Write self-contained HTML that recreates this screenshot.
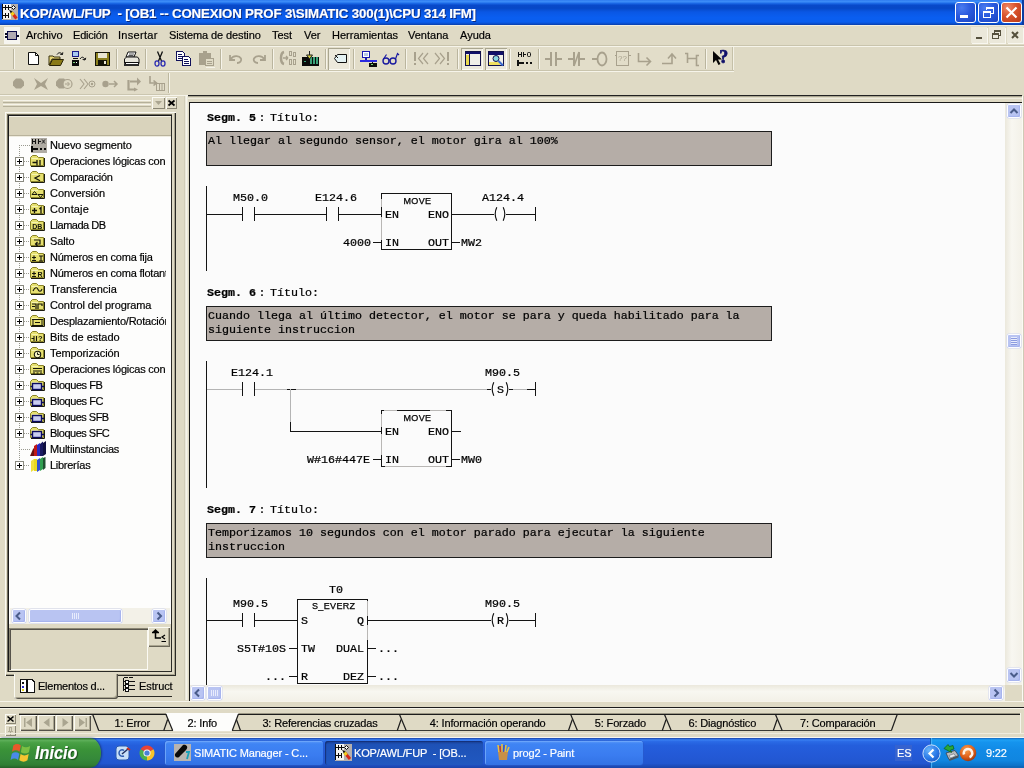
<!DOCTYPE html>
<html><head><meta charset="utf-8"><title>KOP/AWL/FUP</title>
<style>
html,body{margin:0;padding:0;}
body{width:1024px;height:768px;overflow:hidden;background:#dfdac5;font-family:"Liberation Sans",sans-serif;font-size:11px;color:#000;}
#scr{will-change:transform;position:relative;width:1024px;height:768px;overflow:hidden;background:#dfdac5;}
.a{position:absolute;}
.t{position:absolute;white-space:pre;line-height:1;-webkit-text-stroke:0.18px currentColor;}
.m{position:absolute;white-space:pre;font-family:"Liberation Mono",monospace;font-size:11.67px;line-height:14px;color:#000;-webkit-text-stroke:0.22px #000;}
.mb{font-weight:bold;}
.s{position:absolute;white-space:pre;font-family:"Liberation Sans",sans-serif;font-size:9px;line-height:12px;color:#000;-webkit-text-stroke:0.25px #000;}
.k{position:absolute;background:#141414;}
.g{position:absolute;background:#b4b4b4;}
svg{position:absolute;overflow:visible;}

</style></head>
<body>
<div id="scr">
<!-- titlebar.html -->
<div class="a" id="title" style="left:0;top:0;width:1024px;height:25px;background:linear-gradient(to bottom,#2f7cf0 0%,#3d8ef8 7%,#1c6ae8 13%,#0849ca 21%,#0748c6 33%,#0a57e4 48%,#0a5ef0 70%,#0a5eee 88%,#0a4fd0 94%,#0a3ea8 100%);"></div>
<div class="a" style="left:1022px;top:0;width:2px;height:25px;background:#0a3ca0;"></div>
<svg style="left:2px;top:4px" width="16" height="16" viewBox="0 0 16 16" shape-rendering="crispEdges"><rect x="0" y="0" width="16" height="16" fill="#b4b0ae"/><rect x="1" y="0" width="8" height="15" fill="#f4f4f2"/><rect x="0" y="0" width="1" height="15" fill="#0a0a0a"/><path d="M1 3.500H9M1 11.500H7M3.500 1V6M6.500 1V6M3.500 9V14M6.500 9V14" stroke="#0a0a0a" fill="none"/><path d="M9.500 3.500L11.500 1.500L13.500 3.500L11.500 5.500Z" fill="#f4f4f2" stroke="#0a0a0a" shape-rendering="auto"/><path d="M7 5.500L9 10L11 8Z" fill="#0a0a0a" shape-rendering="auto"/><path d="M10 9L14.500 14.500" stroke="#d82818" stroke-width="3" shape-rendering="auto"/><path d="M9.500 8.500L11.500 11" stroke="#f0d020" stroke-width="3" shape-rendering="auto"/></svg>
<div class="t" style="left:20px;top:7px;font-size:13.3px;font-weight:bold;color:#fff;text-shadow:1px 1px 0 #0a2a80;letter-spacing:-0.16px;">KOP/AWL/FUP  - [OB1 -- CONEXION PROF 3\SIMATIC 300(1)\CPU 314 IFM]</div>
<!-- window buttons -->
<div class="a" style="left:955px;top:2px;width:19px;height:19px;border:1px solid #fff;border-radius:3px;background:radial-gradient(circle at 30% 25%,#4a7cf0 0%,#2a5ade 45%,#1a43c0 100%);"></div>
<div class="a" style="left:960px;top:15px;width:8px;height:3px;background:#fff;"></div>
<div class="a" style="left:978px;top:2px;width:19px;height:19px;border:1px solid #fff;border-radius:3px;background:radial-gradient(circle at 30% 25%,#4a7cf0 0%,#2a5ade 45%,#1a43c0 100%);"></div>
<svg style="left:983px;top:7px" width="12" height="11" viewBox="0 0 12 11" shape-rendering="crispEdges"><path d="M3.500 3V0.500H10.500V6.500H8" fill="none" stroke="#fff"/><path d="M3 1.500H11" stroke="#fff"/><rect x="0.500" y="4.500" width="7" height="6" fill="none" stroke="#fff"/><path d="M0 5.500H8" stroke="#fff"/></svg>
<div class="a" style="left:1001px;top:2px;width:19px;height:19px;border:1px solid #fff;border-radius:3px;background:radial-gradient(circle at 30% 25%,#f08a68 0%,#d8522c 45%,#b83a18 100%);"></div>
<svg style="left:1005px;top:6px" width="13" height="13" viewBox="0 0 13 13"><path d="M1.500 1.500L11.500 11.500M11.500 1.500L1.500 11.500" stroke="#fff" stroke-width="2.200"/></svg>

<!-- menubar.html -->
<div class="a" style="left:0;top:25px;width:1024px;height:21px;background:#dfdac5;"></div>
<div class="a" style="left:0;top:25px;width:1024px;height:1px;background:#f0ede0;"></div>
<div class="a" style="left:4px;top:27px;width:16px;height:17px;background:#f6f5f0;"></div>
<svg style="left:5px;top:31px" width="15" height="10" viewBox="0 0 15 10" shape-rendering="crispEdges"><rect x="2" y="0" width="10" height="9" fill="#0a0a48"/><rect x="3" y="1" width="8" height="7" fill="#b0aab2"/><rect x="0" y="2" width="2" height="2" fill="#0a0a20"/><rect x="0" y="5" width="2" height="2" fill="#0a0a20"/><rect x="12" y="4" width="2" height="2" fill="#0a0a20"/></svg>
<div class="t" style="left:26px;top:30px;font-size:11px;">Archivo</div>
<div class="t" style="left:73px;top:30px;font-size:11px;letter-spacing:-0.2px;">Edición</div>
<div class="t" style="left:118px;top:30px;font-size:11px;letter-spacing:0.3px;">Insertar</div>
<div class="t" style="left:169px;top:30px;font-size:11px;letter-spacing:-0.1px;">Sistema de destino</div>
<div class="t" style="left:272px;top:30px;font-size:11px;">Test</div>
<div class="t" style="left:304px;top:30px;font-size:11px;">Ver</div>
<div class="t" style="left:332px;top:30px;font-size:11px;">Herramientas</div>
<div class="t" style="left:408px;top:30px;font-size:11px;">Ventana</div>
<div class="t" style="left:460px;top:30px;font-size:11px;">Ayuda</div>
<!-- MDI child buttons -->
<div class="a" style="left:971px;top:27px;width:16px;height:16px;background:#ebe8da;box-shadow:1px 1px 0 #f8f7f0;"></div>
<div class="a" style="left:976px;top:37px;width:6px;height:2px;background:#55503c;"></div>
<div class="a" style="left:989px;top:27px;width:16px;height:16px;background:#ebe8da;box-shadow:1px 1px 0 #f8f7f0;"></div>
<svg style="left:992px;top:30px" width="10" height="9" viewBox="0 0 10 9" shape-rendering="crispEdges"><path d="M2.500 3V0.500H8.500V5.500H7" fill="none" stroke="#55503c"/><path d="M2 1.500H9" stroke="#55503c"/><rect x="0.500" y="3.500" width="6" height="5" fill="none" stroke="#55503c"/><path d="M0 4.500H7" stroke="#55503c"/></svg>
<div class="a" style="left:1007px;top:27px;width:16px;height:16px;background:#ebe8da;box-shadow:1px 1px 0 #f8f7f0;"></div>
<svg style="left:1011px;top:31px" width="8" height="8" viewBox="0 0 8 8"><path d="M1 1L7 7M7 1L1 7" stroke="#55503c" stroke-width="2"/></svg>

<!-- toolbars.html -->
<div class="a" style="left:0px;top:45px;width:1024px;height:1px;background:#c9c4ad;"></div>
<div class="a" style="left:0px;top:46px;width:1024px;height:1px;background:#f6f4ea;"></div>
<div class="a" style="left:0px;top:47px;width:733px;height:23px;background:#e2ddc9;"></div>
<div class="a" style="left:0px;top:72px;width:169px;height:22px;background:#e1dcc8;"></div>
<div class="a" style="left:733px;top:47px;width:1px;height:23px;background:#f3f1e6;"></div>
<div class="a" style="left:732px;top:47px;width:1px;height:23px;background:#c5c0a8;"></div>
<div class="a" style="left:0px;top:70px;width:734px;height:1px;background:#c9c4ad;"></div>
<div class="a" style="left:0px;top:71px;width:734px;height:1px;background:#f6f4ea;"></div>
<div class="a" style="left:168px;top:73px;width:1px;height:20px;background:#bdb8a0;"></div>
<div class="a" style="left:169px;top:73px;width:1px;height:20px;background:#f6f4ea;"></div>
<div class="a" style="left:0px;top:94px;width:170px;height:1px;background:#cbc6b0;"></div>
<div class="a" style="left:0px;top:95px;width:188px;height:1px;background:#f6f4ea;"></div>
<div class="a" style="left:13px;top:49px;width:1px;height:20px;background:#bab59e;"></div>
<div class="a" style="left:14px;top:49px;width:1px;height:20px;background:#f6f4ea;"></div>
<div class="a" style="left:116px;top:49px;width:1px;height:20px;background:#bab59e;"></div>
<div class="a" style="left:117px;top:49px;width:1px;height:20px;background:#f6f4ea;"></div>
<div class="a" style="left:145px;top:49px;width:1px;height:20px;background:#bab59e;"></div>
<div class="a" style="left:146px;top:49px;width:1px;height:20px;background:#f6f4ea;"></div>
<div class="a" style="left:220px;top:49px;width:1px;height:20px;background:#bab59e;"></div>
<div class="a" style="left:221px;top:49px;width:1px;height:20px;background:#f6f4ea;"></div>
<div class="a" style="left:272px;top:49px;width:1px;height:20px;background:#bab59e;"></div>
<div class="a" style="left:273px;top:49px;width:1px;height:20px;background:#f6f4ea;"></div>
<div class="a" style="left:325px;top:49px;width:1px;height:20px;background:#bab59e;"></div>
<div class="a" style="left:326px;top:49px;width:1px;height:20px;background:#f6f4ea;"></div>
<div class="a" style="left:353px;top:49px;width:1px;height:20px;background:#bab59e;"></div>
<div class="a" style="left:354px;top:49px;width:1px;height:20px;background:#f6f4ea;"></div>
<div class="a" style="left:405px;top:49px;width:1px;height:20px;background:#bab59e;"></div>
<div class="a" style="left:406px;top:49px;width:1px;height:20px;background:#f6f4ea;"></div>
<div class="a" style="left:457px;top:49px;width:1px;height:20px;background:#bab59e;"></div>
<div class="a" style="left:458px;top:49px;width:1px;height:20px;background:#f6f4ea;"></div>
<div class="a" style="left:509px;top:49px;width:1px;height:20px;background:#bab59e;"></div>
<div class="a" style="left:510px;top:49px;width:1px;height:20px;background:#f6f4ea;"></div>
<div class="a" style="left:538px;top:49px;width:1px;height:20px;background:#bab59e;"></div>
<div class="a" style="left:539px;top:49px;width:1px;height:20px;background:#f6f4ea;"></div>
<div class="a" style="left:705px;top:49px;width:1px;height:20px;background:#bab59e;"></div>
<div class="a" style="left:706px;top:49px;width:1px;height:20px;background:#f6f4ea;"></div>
<div class="a" style="left:328px;top:48px;width:22px;height:22px;background:#ece9dc;box-shadow:inset 1px 1px 0 #a9a58f, inset -1px -1px 0 #fbfaf4;"></div>
<div class="a" style="left:461px;top:48px;width:22px;height:22px;background:#ece9dc;box-shadow:inset 1px 1px 0 #a9a58f, inset -1px -1px 0 #fbfaf4;"></div>
<div class="a" style="left:485px;top:48px;width:22px;height:22px;background:#ece9dc;box-shadow:inset 1px 1px 0 #a9a58f, inset -1px -1px 0 #fbfaf4;"></div>
<svg style="left:28px;top:52px" width="12" height="14" viewBox="0 0 12 14"><path d="M0.500 0.500H7.500L10.500 3.500V12.500H0.500Z" fill="#fff" stroke="#111" stroke-width="1"/><path d="M7.500 0.500V3.500H10.500" fill="none" stroke="#111"/></svg>
<svg style="left:48px;top:51px" width="17" height="16" viewBox="0 0 17 16"><path d="M1 5h4l1 1h6v2H4l-3 6z" fill="#e8d878" stroke="#3a3210" stroke-width="1"/><path d="M1.5 14.5L4.5 8.5H15.5L12.5 14.5Z" fill="#8a7a18" stroke="#2a2408"/><path d="M9 3.5C10.5 1.2 13 1.2 14.5 3.5M14.5 3.5l-2.3-.2M14.5 3.5l.3-2.2" fill="none" stroke="#111"/></svg>
<svg style="left:71px;top:51px" width="17" height="16" viewBox="0 0 17 16" shape-rendering="crispEdges"><rect x="1" y="0" width="7" height="6" fill="#1a1a8a"/><rect x="2" y="1" width="5" height="4" fill="#a8c8f0"/><rect x="2" y="7" width="5" height="1" fill="#111"/><rect x="1" y="9" width="7" height="6" fill="#0a0a0a"/><rect x="2" y="11" width="2" height="1" fill="#7ad07a"/><rect x="5" y="11" width="1" height="1" fill="#fff"/><path d="M9 8c2-3 4-2 5 1m0 0l-2.4-.6m2.4.6l.8-2.2" fill="none" stroke="#111" shape-rendering="auto"/></svg>
<svg style="left:95px;top:52px" width="15" height="14" viewBox="0 0 15 14" shape-rendering="crispEdges"><rect x="0" y="0" width="15" height="14" fill="#141408"/><rect x="1" y="1" width="13" height="12" fill="#8a7f1e"/><rect x="3" y="1" width="9" height="5" fill="#e9e6d2"/><rect x="3" y="8" width="9" height="5" fill="#141408"/><rect x="9" y="9" width="2" height="3" fill="#e9e6d2"/></svg>
<svg style="left:123px;top:51px" width="17" height="16" viewBox="0 0 17 16" shape-rendering="crispEdges"><path d="M5 1h8l-2 5H3z" fill="#fff" stroke="#111" shape-rendering="auto"/><path d="M6 3h5M5.4 4.5h5" stroke="#555" shape-rendering="auto"/><path d="M1.500 8L3.500 6H14.500L16 8V12.500H1.500Z" fill="#e8e6dc" stroke="#111" shape-rendering="auto"/><rect x="2" y="11" width="13" height="3" fill="#fff" stroke="#111"/><rect x="1" y="13" width="15" height="2" fill="#2a2a2a"/></svg>
<svg style="left:154px;top:51px" width="12" height="16" viewBox="0 0 12 16"><path d="M3.5 0.5L7.5 10M8.500 0.500L4.500 10" stroke="#111" fill="none" stroke-width="1.3"/><ellipse cx="3" cy="12.500" rx="2" ry="2.600" fill="none" stroke="#2a2ab0" stroke-width="1.300"/><ellipse cx="9" cy="12.500" rx="2" ry="2.600" fill="none" stroke="#2a2ab0" stroke-width="1.300"/></svg>
<svg style="left:176px;top:51px" width="16" height="16" viewBox="0 0 16 16" shape-rendering="crispEdges"><path d="M0.5 0.5h6l2 2v7h-8z" fill="#fff" stroke="#10105a"/><path d="M2 3h4M2 5h5M2 7h5" stroke="#10105a"/><path d="M6.500 5.500h6l2 2v7h-8z" fill="#fff" stroke="#10105a"/><path d="M8 8h4M8 10h5M8 12h5" stroke="#10105a"/></svg>
<svg style="left:198px;top:51px" width="17" height="16" viewBox="0 0 17 16" shape-rendering="crispEdges"><rect x="1" y="2" width="12" height="12" fill="#a8a18d"/><rect x="5" y="0" width="4" height="3" fill="#a8a18d"/><rect x="7.500" y="7.500" width="8" height="7" fill="#dfdac5" stroke="#a8a18d"/><path d="M9 10h5M9 12h5" stroke="#a8a18d"/><path d="M8 16h9" stroke="#f4f2e8"/></svg>
<svg style="left:229px;top:54px" width="14" height="10" viewBox="0 0 14 10"><path d="M1 1v5h5M1.500 5.500C4 1.500 10 1 12 4.500C13 7 11 9 8 9" fill="none" stroke="#a8a18d" stroke-width="1.800"/></svg>
<svg style="left:252px;top:54px" width="14" height="10" viewBox="0 0 14 10"><path d="M13 1v5h-5M12.500 5.500C10 1.500 4 1 2 4.500C1 7 3 9 6 9" fill="none" stroke="#a8a18d" stroke-width="1.800"/></svg>
<svg style="left:279px;top:51px" width="18" height="16" viewBox="0 0 18 16" shape-rendering="crispEdges"><path d="M5 1C1 2 1 12 5 13" fill="none" stroke="#a8a18d" stroke-width="2.500" shape-rendering="auto"/><path d="M4 7h5m0 0l-2-2m2 2l-2 2" stroke="#a8a18d" stroke-width="1.300" fill="none" shape-rendering="auto"/><rect x="10.500" y="0.500" width="2" height="4" fill="none" stroke="#a8a18d"/><rect x="14.500" y="1.500" width="2" height="4" fill="none" stroke="#a8a18d"/><rect x="10.500" y="8.500" width="2" height="5" fill="none" stroke="#a8a18d"/><rect x="14.500" y="8.500" width="2" height="5" fill="none" stroke="#a8a18d"/></svg>
<svg style="left:302px;top:51px" width="17" height="16" viewBox="0 0 17 16" shape-rendering="crispEdges"><rect x="0" y="6" width="17" height="9" fill="#0a0a0a"/><rect x="8" y="6" width="2" height="7" fill="#3aa078"/><rect x="11" y="6" width="2" height="7" fill="#3aa078"/><rect x="14" y="6" width="2" height="7" fill="#3aa078"/><path d="M2 10l2 1" stroke="#3aa078"/><path d="M7.500 0v4M4.500 4h6l-3 4z" fill="#d8d040" stroke="#222" shape-rendering="auto"/></svg>
<svg style="left:334px;top:54px" width="14" height="10" viewBox="0 0 14 10"><path d="M3.500 0.500H12.500V8.500H3.500L0.500 4.500Z" fill="#e4f2f4" stroke="#111"/><path d="M1 1l3 3" stroke="#111"/></svg>
<svg style="left:360px;top:51px" width="17" height="16" viewBox="0 0 17 16" shape-rendering="crispEdges"><rect x="2.500" y="0.500" width="7" height="6" fill="#fff" stroke="#1a1ab0"/><rect x="4" y="2" width="4" height="3" fill="#b8c8e8"/><rect x="5" y="7" width="2" height="2" fill="#1a1ab0"/><rect x="0" y="9" width="17" height="2" fill="#2a2ae0"/><rect x="12" y="11" width="1" height="1" fill="#111"/><rect x="9" y="12" width="8" height="4" fill="#0a0a0a"/><rect x="11" y="13" width="2" height="1" fill="#7ad07a"/></svg>
<svg style="left:382px;top:52px" width="18" height="13" viewBox="0 0 18 13"><circle cx="4" cy="9" r="3" fill="none" stroke="#1a1aa0" stroke-width="1.400"/><circle cx="11" cy="9" r="3" fill="none" stroke="#1a1aa0" stroke-width="1.400"/><path d="M7 8h1M1.500 7L4.500 2.500M13.500 7L15.500 1.500L17 3" fill="none" stroke="#1a1aa0" stroke-width="1.200"/></svg>
<svg style="left:413px;top:51px" width="16" height="16" viewBox="0 0 16 16" shape-rendering="crispEdges"><rect x="1" y="1" width="2" height="9" fill="#a8a18d"/><rect x="1" y="12" width="2" height="2" fill="#a8a18d"/><path d="M10 2L5.500 7.500L10 13M15 2L10.500 7.500L15 13" fill="none" stroke="#a8a18d" stroke-width="1.200" shape-rendering="auto"/></svg>
<svg style="left:434px;top:51px" width="16" height="16" viewBox="0 0 16 16" shape-rendering="crispEdges"><rect x="13" y="1" width="2" height="9" fill="#a8a18d"/><rect x="13" y="12" width="2" height="2" fill="#a8a18d"/><path d="M1 2L5.500 7.500L1 13M6 2L10.500 7.500L6 13" fill="none" stroke="#a8a18d" stroke-width="1.200" shape-rendering="auto"/></svg>
<svg style="left:465px;top:51px" width="16" height="15" viewBox="0 0 16 15" shape-rendering="crispEdges"><rect x="0.500" y="0.500" width="15" height="14" fill="#f0efe8" stroke="#10104a"/><rect x="1" y="1" width="14" height="2" fill="#10106a"/><rect x="1" y="4" width="3" height="10" fill="#e8d850"/><rect x="4" y="3" width="1" height="11" fill="#10104a"/></svg>
<svg style="left:488px;top:51px" width="17" height="16" viewBox="0 0 17 16" shape-rendering="crispEdges"><rect x="0.500" y="0.500" width="15" height="14" fill="#f0efe8" stroke="#10104a"/><rect x="1" y="1" width="14" height="3" fill="#10106a"/><rect x="1" y="11" width="11" height="3" fill="#f0e060"/><circle cx="8" cy="7.500" r="3" fill="#8ad8e0" stroke="#10104a" shape-rendering="auto"/><path d="M10.500 10L15 14.500" stroke="#3a6ad0" stroke-width="2" shape-rendering="auto"/></svg>
<svg style="left:517px;top:51px" width="16" height="15" viewBox="0 0 16 15" shape-rendering="crispEdges"><path d="M1 1v5M4 1v5M1 3.500h3M6 1v5M6 3.500h3" stroke="#111" fill="none"/><rect x="10.500" y="1.500" width="3" height="4" fill="none" stroke="#111" rx="1" shape-rendering="auto"/><rect x="0" y="9" width="2" height="6" fill="#111"/><rect x="2" y="11" width="5" height="2" fill="#111"/><rect x="9" y="11" width="2" height="2" fill="#111"/><rect x="13" y="11" width="2" height="2" fill="#111"/></svg>
<svg style="left:545px;top:51px" width="17" height="16" viewBox="0 0 17 16" shape-rendering="crispEdges"><rect x="0" y="7" width="6" height="2" fill="#a8a18d"/><rect x="11" y="7" width="6" height="2" fill="#a8a18d"/><rect x="5" y="1" width="2" height="14" fill="#a8a18d"/><rect x="10" y="1" width="2" height="14" fill="#a8a18d"/></svg>
<svg style="left:568px;top:51px" width="17" height="16" viewBox="0 0 17 16" shape-rendering="crispEdges"><rect x="0" y="7" width="6" height="2" fill="#a8a18d"/><rect x="11" y="7" width="6" height="2" fill="#a8a18d"/><rect x="5" y="1" width="2" height="14" fill="#a8a18d"/><rect x="10" y="1" width="2" height="14" fill="#a8a18d"/><path d="M11 1L6 15" stroke="#a8a18d" stroke-width="1.600" shape-rendering="auto"/></svg>
<svg style="left:592px;top:51px" width="16" height="16" viewBox="0 0 16 16" shape-rendering="crispEdges"><rect x="0" y="7" width="5" height="2" fill="#a8a18d"/><ellipse cx="10" cy="8" rx="4.500" ry="6.500" fill="none" stroke="#a8a18d" stroke-width="1.800" shape-rendering="auto"/></svg>
<svg style="left:615px;top:51px" width="16" height="16" viewBox="0 0 16 16" shape-rendering="crispEdges"><rect x="1.500" y="0.500" width="12" height="14" fill="none" stroke="#a8a18d"/><rect x="0" y="4" width="2" height="1" fill="#a8a18d"/><rect x="13" y="4" width="3" height="1" fill="#a8a18d"/><text x="3" y="10" font-family="Liberation Sans" font-size="8" fill="#a8a18d" shape-rendering="auto">??</text></svg>
<svg style="left:637px;top:51px" width="15" height="16" viewBox="0 0 15 16" shape-rendering="crispEdges"><path d="M1.500 2V10.500H13M9.500 6.500L13.500 10.500L9.500 14.500" fill="none" stroke="#a8a18d" stroke-width="1.600" shape-rendering="auto"/></svg>
<svg style="left:661px;top:51px" width="16" height="16" viewBox="0 0 16 16" shape-rendering="crispEdges"><path d="M1 12.500H11V4M7 7.500L11 3L15 7.500" fill="none" stroke="#a8a18d" stroke-width="1.600" shape-rendering="auto"/></svg>
<svg style="left:684px;top:51px" width="16" height="16" viewBox="0 0 16 16" shape-rendering="crispEdges"><path d="M1 2.500H3.500V12M3.500 7.500H12.500M15 4.500H12.500V14.500H15" fill="none" stroke="#a8a18d" stroke-width="1.600" shape-rendering="auto"/></svg>
<svg style="left:712px;top:51px" width="18" height="16" viewBox="0 0 18 16"><path d="M1 0V12L4 9L6.500 14L8.500 13L6 8.500H10Z" fill="#050505"/><text x="7.300" y="12.300" font-family="Liberation Serif" font-weight="bold" font-size="18" fill="#10106a" stroke="#10106a" stroke-width="0.700">?</text></svg>
<svg style="left:13px;top:76px" width="11" height="16" viewBox="0 0 11 16"><path d="M3 2.500h5l3 3v4l-3 3H3l-3-3v-4z" fill="#a8a18d"/></svg>
<svg style="left:33px;top:76px" width="16" height="16" viewBox="0 0 16 16"><path d="M1 2L8 7L15 2L12 8L15 14L8 10L1 14L4 8Z" fill="#a8a18d"/></svg>
<svg style="left:56px;top:76px" width="17" height="16" viewBox="0 0 17 16"><path d="M3 2.500h5l3 3v4l-3 3H3l-3-3v-4z" fill="#a8a18d"/><circle cx="11.500" cy="8" r="4.500" fill="#dfdac5" stroke="#a8a18d" stroke-width="1.200"/><path d="M9 8h4m-1.500-2l2 2l-2 2" stroke="#a8a18d" fill="none"/></svg>
<svg style="left:79px;top:76px" width="17" height="16" viewBox="0 0 17 16"><path d="M1 3L5 8L1 13M5 3L9 8L5 13" fill="none" stroke="#a8a18d" stroke-width="1.100"/><circle cx="13" cy="8" r="3" fill="none" stroke="#a8a18d"/><circle cx="13" cy="8" r="1.200" fill="#a8a18d"/></svg>
<svg style="left:102px;top:76px" width="17" height="16" viewBox="0 0 17 16"><circle cx="3.500" cy="8" r="3.200" fill="#a8a18d"/><path d="M7 8h8M12 5l3 3l-3 3" fill="none" stroke="#a8a18d" stroke-width="1.500"/></svg>
<svg style="left:126px;top:76px" width="16" height="16" viewBox="0 0 16 16"><path d="M2.500 4V13.500H9" fill="none" stroke="#a8a18d" stroke-width="2.200"/><path d="M4 4.500H11V1.500L15 5.500L11 9.500V6.500H4Z" fill="#a8a18d"/><path d="M8 11.500L12 13.500L8 15.500Z" fill="#a8a18d"/></svg>
<svg style="left:148px;top:76px" width="18" height="16" viewBox="0 0 18 16"><path d="M2 0V7H8M5.500 4.500L8.500 7L5.500 9.500" fill="none" stroke="#a8a18d" stroke-width="1.600"/><rect x="8.500" y="7.500" width="8" height="7" fill="none" stroke="#a8a18d"/><path d="M11.500 7.500v7M14 7.500v7" stroke="#a8a18d"/></svg>

<!-- leftpanel.html -->
<div class="a" style="left:184px;top:96px;width:1px;height:604px;background:#d2cdb8;"></div>
<div class="a" style="left:185px;top:96px;width:3px;height:604px;background:#ebe8da;"></div>
<div class="a" style="left:186px;top:96px;width:1px;height:604px;background:#f6f4ea;"></div>
<div class="a" style="left:3px;top:100px;width:148px;height:1px;background:#f6f4ea;"></div>
<div class="a" style="left:3px;top:101px;width:148px;height:1px;background:#dfdac5;"></div>
<div class="a" style="left:3px;top:102px;width:148px;height:1px;background:#b5b09a;"></div>
<div class="a" style="left:3px;top:104px;width:148px;height:1px;background:#f6f4ea;"></div>
<div class="a" style="left:3px;top:105px;width:148px;height:1px;background:#dfdac5;"></div>
<div class="a" style="left:3px;top:106px;width:148px;height:1px;background:#b5b09a;"></div>
<div class="a" style="left:152px;top:97px;width:13px;height:12px;background:#dfdac5;box-shadow:inset 1px 1px 0 #fbfaf3, inset -1px -1px 0 #8a8674;"></div>
<svg style="left:155px;top:101px" width="7" height="4" viewBox="0 0 7 4"><path d="M0 0H7L3.500 4Z" fill="#aaa590"/></svg>
<div class="a" style="left:166px;top:97px;width:11px;height:12px;background:#dfdac5;box-shadow:inset 1px 1px 0 #fbfaf3, inset -1px -1px 0 #8a8674;"></div>
<svg style="left:168px;top:100px" width="7" height="6" viewBox="0 0 7 6"><path d="M0.500 0.500L6.500 5.500M6.500 0.500L0.500 5.500" stroke="#000" stroke-width="1.700"/></svg>
<div class="a" style="left:5px;top:112px;width:171px;height:564px;background:#dfdac5;box-shadow:inset 1px 1px 0 #fbfaf3, inset -1px -1px 0 #2a2a26, inset -2px -2px 0 #aaa590;"></div>
<div class="a" style="left:7px;top:114px;width:165px;height:558px;background:#fdfdfc;border:0;box-shadow:inset 1px 1px 0 #6e6a5a, inset 2px 2px 0 #1a1a1a, inset -1px -1px 0 #2a2a26;"></div>
<div class="a" style="left:9px;top:624px;width:162px;height:47px;background:#dfdac5;"></div>
<div class="a" style="left:9px;top:116px;width:162px;height:20px;background:#d9d3bc;"></div>
<div class="a" style="left:9px;top:116px;width:162px;height:1px;background:#f2efe2;"></div>
<div class="a" style="left:9px;top:135px;width:162px;height:1px;background:#b9b39c;"></div>
<div class="a" style="left:9px;top:136px;width:162px;height:1px;background:#efece0;"></div>
<div class="t" style="left:50px;top:140px;font-size:11px;letter-spacing:-0.1px;">Nuevo segmento</div>
<svg style="left:31px;top:138px" width="16" height="15" viewBox="0 0 16 15" shape-rendering="crispEdges"><rect x="0" y="0" width="16" height="15" fill="#b0aca4"/><path d="M1.500 1v5M4.500 1v5M1.500 3.500h3M7.500 1v5M7.500 3.500h2" stroke="#111" fill="none"/><path d="M11 1.500C12.500 2.500 12.500 4.500 11 5.500M14 1.500C12.500 2.500 12.500 4.500 14 5.500" stroke="#111" fill="none" shape-rendering="auto"/><rect x="0" y="8" width="2" height="6" fill="#0a0a0a"/><rect x="2" y="10" width="5" height="2" fill="#0a0a0a"/><rect x="9" y="10" width="2" height="2" fill="#0a0a0a"/><rect x="13" y="10" width="2" height="2" fill="#0a0a0a"/></svg>
<div class="t" style="left:50px;top:156px;font-size:11px;letter-spacing:-0.22px;">Operaciones l&oacute;gicas con</div>
<svg style="left:30px;top:154px" width="16" height="14" viewBox="0 0 16 14"><path d="M0.500 3.500L2.500 1.500H6.500L8.500 3.500H13.500V11.500H0.500Z" fill="#e6e070" stroke="#8a8428"/><path d="M1 12.500H14.500V4" fill="none" stroke="#1a1a10"/><path d="M1.500 4.500H8" stroke="#f6f4b0"/><path d="M2.500 8.500h4M7 6v5.500M10 6v5.500" stroke="#15150a" stroke-width="1.300"/></svg>
<div class="t" style="left:50px;top:172px;font-size:11px;letter-spacing:-0.25px;">Comparaci&oacute;n</div>
<svg style="left:30px;top:170px" width="16" height="14" viewBox="0 0 16 14"><path d="M0.500 3.500L2.500 1.500H6.500L8.500 3.500H13.500V11.500H0.500Z" fill="#e6e070" stroke="#8a8428"/><path d="M1 12.500H14.500V4" fill="none" stroke="#1a1a10"/><path d="M1.500 4.500H8" stroke="#f6f4b0"/><path d="M10 5.500L5 8L10 10.800" stroke="#15150a" fill="none" stroke-width="1.300"/></svg>
<div class="t" style="left:50px;top:188px;font-size:11px;letter-spacing:-0.05px;">Conversi&oacute;n</div>
<svg style="left:30px;top:186px" width="16" height="14" viewBox="0 0 16 14"><path d="M0.500 3.500L2.500 1.500H6.500L8.500 3.500H13.500V11.500H0.500Z" fill="#e6e070" stroke="#8a8428"/><path d="M1 12.500H14.500V4" fill="none" stroke="#1a1a10"/><path d="M1.500 4.500H8" stroke="#f6f4b0"/><path d="M2 8.500L4.500 5.500L7 8.500ZM8 8.500H13L10.500 11.500Z" stroke="#15150a" fill="none"/></svg>
<div class="t" style="left:50px;top:204px;font-size:11px;letter-spacing:0.15px;">Contaje</div>
<svg style="left:30px;top:202px" width="16" height="14" viewBox="0 0 16 14"><path d="M0.500 3.500L2.500 1.500H6.500L8.500 3.500H13.500V11.500H0.500Z" fill="#e6e070" stroke="#8a8428"/><path d="M1 12.500H14.500V4" fill="none" stroke="#1a1a10"/><path d="M1.500 4.500H8" stroke="#f6f4b0"/><path d="M2 8.500h5M4.500 6v5M9.500 7l1.500-1.500V11.500" stroke="#15150a" fill="none" stroke-width="1.300"/></svg>
<div class="t" style="left:50px;top:220px;font-size:11px;letter-spacing:-0.5px;">Llamada DB</div>
<svg style="left:30px;top:218px" width="16" height="14" viewBox="0 0 16 14"><path d="M0.500 3.500L2.500 1.500H6.500L8.500 3.500H13.500V11.500H0.500Z" fill="#e6e070" stroke="#8a8428"/><path d="M1 12.500H14.500V4" fill="none" stroke="#1a1a10"/><path d="M1.500 4.500H8" stroke="#f6f4b0"/><text x="2.300" y="11" font-family="Liberation Sans" font-weight="bold" font-size="7" fill="#15150a">DB</text></svg>
<div class="t" style="left:50px;top:236px;font-size:11px;letter-spacing:-0.1px;">Salto</div>
<svg style="left:30px;top:234px" width="16" height="14" viewBox="0 0 16 14"><path d="M0.500 3.500L2.500 1.500H6.500L8.500 3.500H13.500V11.500H0.500Z" fill="#e6e070" stroke="#8a8428"/><path d="M1 12.500H14.500V4" fill="none" stroke="#1a1a10"/><path d="M1.500 4.500H8" stroke="#f6f4b0"/><path d="M4 6h6v4H5.500M7.500 8L5.500 10L7.500 12" stroke="#15150a" fill="none" stroke-width="1.200"/></svg>
<div class="t" style="left:50px;top:252px;font-size:11px;letter-spacing:-0.22px;">N&uacute;meros en coma fija</div>
<svg style="left:30px;top:250px" width="16" height="14" viewBox="0 0 16 14"><path d="M0.500 3.500L2.500 1.500H6.500L8.500 3.500H13.500V11.500H0.500Z" fill="#e6e070" stroke="#8a8428"/><path d="M1 12.500H14.500V4" fill="none" stroke="#1a1a10"/><path d="M1.500 4.500H8" stroke="#f6f4b0"/><path d="M2 7.500h4M4 5.500v4M2 10.500h4M9 6h4M11 6v5M9 11h4" stroke="#15150a" fill="none" stroke-width="1.100"/></svg>
<div class="t" style="left:50px;top:268px;font-size:11px;letter-spacing:-0.22px;">N&uacute;meros en coma flotant</div>
<svg style="left:30px;top:266px" width="16" height="14" viewBox="0 0 16 14"><path d="M0.500 3.500L2.500 1.500H6.500L8.500 3.500H13.500V11.500H0.500Z" fill="#e6e070" stroke="#8a8428"/><path d="M1 12.500H14.500V4" fill="none" stroke="#1a1a10"/><path d="M1.500 4.500H8" stroke="#f6f4b0"/><path d="M2 7.500h4M4 5.500v4M2 10.500h4" stroke="#15150a" fill="none" stroke-width="1.100"/><text x="7.500" y="11.300" font-family="Liberation Sans" font-weight="bold" font-size="7" fill="#15150a">R</text></svg>
<div class="t" style="left:50px;top:284px;font-size:11px;letter-spacing:0px;">Transferencia</div>
<svg style="left:30px;top:282px" width="16" height="14" viewBox="0 0 16 14"><path d="M0.500 3.500L2.500 1.500H6.500L8.500 3.500H13.500V11.500H0.500Z" fill="#e6e070" stroke="#8a8428"/><path d="M1 12.500H14.500V4" fill="none" stroke="#1a1a10"/><path d="M1.500 4.500H8" stroke="#f6f4b0"/><path d="M3 9C5 5 7 5 8 7.500S11 10 12 7" stroke="#15150a" fill="none" stroke-width="1.100"/></svg>
<div class="t" style="left:50px;top:300px;font-size:11px;letter-spacing:-0.1px;">Control del programa</div>
<svg style="left:30px;top:298px" width="16" height="14" viewBox="0 0 16 14"><path d="M0.500 3.500L2.500 1.500H6.500L8.500 3.500H13.500V11.500H0.500Z" fill="#e6e070" stroke="#8a8428"/><path d="M1 12.500H14.500V4" fill="none" stroke="#1a1a10"/><path d="M1.500 4.500H8" stroke="#f6f4b0"/><path d="M2 6h4v5M2 8.500h3M8 11V6h4v2" stroke="#15150a" fill="none" stroke-width="1.200"/></svg>
<div class="t" style="left:50px;top:316px;font-size:11px;letter-spacing:-0.22px;">Desplazamiento/Rotaci&oacute;n</div>
<svg style="left:30px;top:314px" width="16" height="14" viewBox="0 0 16 14"><path d="M0.500 3.500L2.500 1.500H6.500L8.500 3.500H13.500V11.500H0.500Z" fill="#e6e070" stroke="#8a8428"/><path d="M1 12.500H14.500V4" fill="none" stroke="#1a1a10"/><path d="M1.500 4.500H8" stroke="#f6f4b0"/><path d="M2 5.500H13M2 11.500H13M3 6v5M12 6v5M5 8.500h5" stroke="#15150a" fill="none"/></svg>
<div class="t" style="left:50px;top:332px;font-size:11px;letter-spacing:0px;">Bits de estado</div>
<svg style="left:30px;top:330px" width="16" height="14" viewBox="0 0 16 14"><path d="M0.500 3.500L2.500 1.500H6.500L8.500 3.500H13.500V11.500H0.500Z" fill="#e6e070" stroke="#8a8428"/><path d="M1 12.500H14.500V4" fill="none" stroke="#1a1a10"/><path d="M1.500 4.500H8" stroke="#f6f4b0"/><path d="M1.500 8.500h2M4 6v5M6.500 6v5" stroke="#15150a" stroke-width="1.100"/><text x="8" y="11.300" font-family="Liberation Sans" font-weight="bold" font-size="7.500" fill="#15150a">?</text></svg>
<div class="t" style="left:50px;top:348px;font-size:11px;letter-spacing:-0.1px;">Temporizaci&oacute;n</div>
<svg style="left:30px;top:346px" width="16" height="14" viewBox="0 0 16 14"><path d="M0.500 3.500L2.500 1.500H6.500L8.500 3.500H13.500V11.500H0.500Z" fill="#e6e070" stroke="#8a8428"/><path d="M1 12.500H14.500V4" fill="none" stroke="#1a1a10"/><path d="M1.500 4.500H8" stroke="#f6f4b0"/><circle cx="7.500" cy="8.500" r="3.200" fill="#f4f2c0" stroke="#15150a" stroke-width="1.100"/><path d="M7.500 6.500V8.500H9.500" stroke="#15150a" fill="none"/></svg>
<div class="t" style="left:50px;top:364px;font-size:11px;letter-spacing:-0.22px;">Operaciones l&oacute;gicas con</div>
<svg style="left:30px;top:362px" width="16" height="14" viewBox="0 0 16 14"><path d="M0.500 3.500L2.500 1.500H6.500L8.500 3.500H13.500V11.500H0.500Z" fill="#e6e070" stroke="#8a8428"/><path d="M1 12.500H14.500V4" fill="none" stroke="#1a1a10"/><path d="M1.500 4.500H8" stroke="#f6f4b0"/><path d="M3 6.500h9M3 9h9M3 11h2M6.500 11h2M10 11h2" stroke="#15150a" fill="none"/></svg>
<div class="t" style="left:50px;top:380px;font-size:11px;letter-spacing:-0.44px;">Bloques FB</div>
<svg style="left:30px;top:378px" width="16" height="14" viewBox="0 0 16 14"><path d="M0.500 3.500L2.500 1.500H6.500L8.500 3.500H13.500V11.500H0.500Z" fill="#e6e070" stroke="#8a8428"/><path d="M1 12.500H14.500V4" fill="none" stroke="#1a1a10"/><path d="M1.500 4.500H8" stroke="#f6f4b0"/><rect x="2.500" y="5.500" width="9" height="6" fill="#c8ccf0" stroke="#0a0a60" stroke-width="1.400"/><path d="M0.500 8.500h2M11.500 8.500h2.500" stroke="#0a0a60" stroke-width="1.400"/></svg>
<div class="t" style="left:50px;top:396px;font-size:11px;letter-spacing:-0.45px;">Bloques FC</div>
<svg style="left:30px;top:394px" width="16" height="14" viewBox="0 0 16 14"><path d="M0.500 3.500L2.500 1.500H6.500L8.500 3.500H13.500V11.500H0.500Z" fill="#e6e070" stroke="#8a8428"/><path d="M1 12.500H14.500V4" fill="none" stroke="#1a1a10"/><path d="M1.500 4.500H8" stroke="#f6f4b0"/><rect x="2.500" y="5.500" width="9" height="6" fill="#c8ccf0" stroke="#0a0a60" stroke-width="1.400"/><path d="M0.500 8.500h2M11.500 8.500h2.500" stroke="#0a0a60" stroke-width="1.400"/></svg>
<div class="t" style="left:50px;top:412px;font-size:11px;letter-spacing:-0.5px;">Bloques SFB</div>
<svg style="left:30px;top:410px" width="16" height="14" viewBox="0 0 16 14"><path d="M0.500 3.500L2.500 1.500H6.500L8.500 3.500H13.500V11.500H0.500Z" fill="#e6e070" stroke="#8a8428"/><path d="M1 12.500H14.500V4" fill="none" stroke="#1a1a10"/><path d="M1.500 4.500H8" stroke="#f6f4b0"/><rect x="2.500" y="5.500" width="9" height="6" fill="#c8ccf0" stroke="#0a0a60" stroke-width="1.400"/><path d="M0.500 8.500h2M11.500 8.500h2.500" stroke="#0a0a60" stroke-width="1.400"/></svg>
<div class="t" style="left:50px;top:428px;font-size:11px;letter-spacing:-0.5px;">Bloques SFC</div>
<svg style="left:30px;top:426px" width="16" height="14" viewBox="0 0 16 14"><path d="M0.500 3.500L2.500 1.500H6.500L8.500 3.500H13.500V11.500H0.500Z" fill="#e6e070" stroke="#8a8428"/><path d="M1 12.500H14.500V4" fill="none" stroke="#1a1a10"/><path d="M1.500 4.500H8" stroke="#f6f4b0"/><rect x="2.500" y="5.500" width="9" height="6" fill="#c8ccf0" stroke="#0a0a60" stroke-width="1.400"/><path d="M0.500 8.500h2M11.500 8.500h2.500" stroke="#0a0a60" stroke-width="1.400"/></svg>
<div class="t" style="left:50px;top:444px;font-size:11px;letter-spacing:-0.2px;">Multiinstancias</div>
<svg style="left:30px;top:441px" width="17" height="16" viewBox="0 0 17 16"><path d="M0 15L3 8L5 6V15Z" fill="#6a1010"/><path d="M4 15V5L7 3V15Z" fill="#c01818"/><path d="M7 15V4L10 2V15Z" fill="#2828c0"/><path d="M10 15V3L13 0.500V15Z" fill="#1a1a60"/><path d="M13 15V2L16 0V13Z" fill="#101040"/></svg>
<div class="t" style="left:50px;top:460px;font-size:11px;letter-spacing:-0.27px;">Librer&iacute;as</div>
<svg style="left:31px;top:457px" width="16" height="16" viewBox="0 0 16 16"><path d="M0 4L3 2V13L0 15Z" fill="#f0e040"/><path d="M3 2H6V14H3Z" fill="#e8d820"/><path d="M6 3L9 1V13L6 15Z" fill="#3050d0"/><path d="M9 2L12 0V12L9 14Z" fill="#30a050"/><path d="M12 1L14.500 0V11L12 13Z" fill="#205030"/></svg>
<div class="a" style="left:19px;top:145px;width:1px;height:321px;background:repeating-linear-gradient(to bottom,#9a9a90 0 1px,transparent 1px 2px);"></div>
<div class="a" style="left:19px;top:145px;width:11px;height:1px;background:repeating-linear-gradient(to right,#9a9a90 0 1px,transparent 1px 2px);"></div>
<div class="a" style="left:24px;top:161px;width:6px;height:1px;background:repeating-linear-gradient(to right,#9a9a90 0 1px,transparent 1px 2px);"></div>
<div class="a" style="left:15px;top:157px;width:9px;height:9px;background:#fff;box-shadow:inset 0 0 0 1px #8a8a80;"></div>
<div class="a" style="left:17px;top:161px;width:5px;height:1px;background:#000;"></div>
<div class="a" style="left:19px;top:159px;width:1px;height:5px;background:#000;"></div>
<div class="a" style="left:24px;top:177px;width:6px;height:1px;background:repeating-linear-gradient(to right,#9a9a90 0 1px,transparent 1px 2px);"></div>
<div class="a" style="left:15px;top:173px;width:9px;height:9px;background:#fff;box-shadow:inset 0 0 0 1px #8a8a80;"></div>
<div class="a" style="left:17px;top:177px;width:5px;height:1px;background:#000;"></div>
<div class="a" style="left:19px;top:175px;width:1px;height:5px;background:#000;"></div>
<div class="a" style="left:24px;top:193px;width:6px;height:1px;background:repeating-linear-gradient(to right,#9a9a90 0 1px,transparent 1px 2px);"></div>
<div class="a" style="left:15px;top:189px;width:9px;height:9px;background:#fff;box-shadow:inset 0 0 0 1px #8a8a80;"></div>
<div class="a" style="left:17px;top:193px;width:5px;height:1px;background:#000;"></div>
<div class="a" style="left:19px;top:191px;width:1px;height:5px;background:#000;"></div>
<div class="a" style="left:24px;top:209px;width:6px;height:1px;background:repeating-linear-gradient(to right,#9a9a90 0 1px,transparent 1px 2px);"></div>
<div class="a" style="left:15px;top:205px;width:9px;height:9px;background:#fff;box-shadow:inset 0 0 0 1px #8a8a80;"></div>
<div class="a" style="left:17px;top:209px;width:5px;height:1px;background:#000;"></div>
<div class="a" style="left:19px;top:207px;width:1px;height:5px;background:#000;"></div>
<div class="a" style="left:24px;top:225px;width:6px;height:1px;background:repeating-linear-gradient(to right,#9a9a90 0 1px,transparent 1px 2px);"></div>
<div class="a" style="left:15px;top:221px;width:9px;height:9px;background:#fff;box-shadow:inset 0 0 0 1px #8a8a80;"></div>
<div class="a" style="left:17px;top:225px;width:5px;height:1px;background:#000;"></div>
<div class="a" style="left:19px;top:223px;width:1px;height:5px;background:#000;"></div>
<div class="a" style="left:24px;top:241px;width:6px;height:1px;background:repeating-linear-gradient(to right,#9a9a90 0 1px,transparent 1px 2px);"></div>
<div class="a" style="left:15px;top:237px;width:9px;height:9px;background:#fff;box-shadow:inset 0 0 0 1px #8a8a80;"></div>
<div class="a" style="left:17px;top:241px;width:5px;height:1px;background:#000;"></div>
<div class="a" style="left:19px;top:239px;width:1px;height:5px;background:#000;"></div>
<div class="a" style="left:24px;top:257px;width:6px;height:1px;background:repeating-linear-gradient(to right,#9a9a90 0 1px,transparent 1px 2px);"></div>
<div class="a" style="left:15px;top:253px;width:9px;height:9px;background:#fff;box-shadow:inset 0 0 0 1px #8a8a80;"></div>
<div class="a" style="left:17px;top:257px;width:5px;height:1px;background:#000;"></div>
<div class="a" style="left:19px;top:255px;width:1px;height:5px;background:#000;"></div>
<div class="a" style="left:24px;top:273px;width:6px;height:1px;background:repeating-linear-gradient(to right,#9a9a90 0 1px,transparent 1px 2px);"></div>
<div class="a" style="left:15px;top:269px;width:9px;height:9px;background:#fff;box-shadow:inset 0 0 0 1px #8a8a80;"></div>
<div class="a" style="left:17px;top:273px;width:5px;height:1px;background:#000;"></div>
<div class="a" style="left:19px;top:271px;width:1px;height:5px;background:#000;"></div>
<div class="a" style="left:24px;top:289px;width:6px;height:1px;background:repeating-linear-gradient(to right,#9a9a90 0 1px,transparent 1px 2px);"></div>
<div class="a" style="left:15px;top:285px;width:9px;height:9px;background:#fff;box-shadow:inset 0 0 0 1px #8a8a80;"></div>
<div class="a" style="left:17px;top:289px;width:5px;height:1px;background:#000;"></div>
<div class="a" style="left:19px;top:287px;width:1px;height:5px;background:#000;"></div>
<div class="a" style="left:24px;top:305px;width:6px;height:1px;background:repeating-linear-gradient(to right,#9a9a90 0 1px,transparent 1px 2px);"></div>
<div class="a" style="left:15px;top:301px;width:9px;height:9px;background:#fff;box-shadow:inset 0 0 0 1px #8a8a80;"></div>
<div class="a" style="left:17px;top:305px;width:5px;height:1px;background:#000;"></div>
<div class="a" style="left:19px;top:303px;width:1px;height:5px;background:#000;"></div>
<div class="a" style="left:24px;top:321px;width:6px;height:1px;background:repeating-linear-gradient(to right,#9a9a90 0 1px,transparent 1px 2px);"></div>
<div class="a" style="left:15px;top:317px;width:9px;height:9px;background:#fff;box-shadow:inset 0 0 0 1px #8a8a80;"></div>
<div class="a" style="left:17px;top:321px;width:5px;height:1px;background:#000;"></div>
<div class="a" style="left:19px;top:319px;width:1px;height:5px;background:#000;"></div>
<div class="a" style="left:24px;top:337px;width:6px;height:1px;background:repeating-linear-gradient(to right,#9a9a90 0 1px,transparent 1px 2px);"></div>
<div class="a" style="left:15px;top:333px;width:9px;height:9px;background:#fff;box-shadow:inset 0 0 0 1px #8a8a80;"></div>
<div class="a" style="left:17px;top:337px;width:5px;height:1px;background:#000;"></div>
<div class="a" style="left:19px;top:335px;width:1px;height:5px;background:#000;"></div>
<div class="a" style="left:24px;top:353px;width:6px;height:1px;background:repeating-linear-gradient(to right,#9a9a90 0 1px,transparent 1px 2px);"></div>
<div class="a" style="left:15px;top:349px;width:9px;height:9px;background:#fff;box-shadow:inset 0 0 0 1px #8a8a80;"></div>
<div class="a" style="left:17px;top:353px;width:5px;height:1px;background:#000;"></div>
<div class="a" style="left:19px;top:351px;width:1px;height:5px;background:#000;"></div>
<div class="a" style="left:24px;top:369px;width:6px;height:1px;background:repeating-linear-gradient(to right,#9a9a90 0 1px,transparent 1px 2px);"></div>
<div class="a" style="left:15px;top:365px;width:9px;height:9px;background:#fff;box-shadow:inset 0 0 0 1px #8a8a80;"></div>
<div class="a" style="left:17px;top:369px;width:5px;height:1px;background:#000;"></div>
<div class="a" style="left:19px;top:367px;width:1px;height:5px;background:#000;"></div>
<div class="a" style="left:24px;top:385px;width:6px;height:1px;background:repeating-linear-gradient(to right,#9a9a90 0 1px,transparent 1px 2px);"></div>
<div class="a" style="left:15px;top:381px;width:9px;height:9px;background:#fff;box-shadow:inset 0 0 0 1px #8a8a80;"></div>
<div class="a" style="left:17px;top:385px;width:5px;height:1px;background:#000;"></div>
<div class="a" style="left:19px;top:383px;width:1px;height:5px;background:#000;"></div>
<div class="a" style="left:24px;top:401px;width:6px;height:1px;background:repeating-linear-gradient(to right,#9a9a90 0 1px,transparent 1px 2px);"></div>
<div class="a" style="left:15px;top:397px;width:9px;height:9px;background:#fff;box-shadow:inset 0 0 0 1px #8a8a80;"></div>
<div class="a" style="left:17px;top:401px;width:5px;height:1px;background:#000;"></div>
<div class="a" style="left:19px;top:399px;width:1px;height:5px;background:#000;"></div>
<div class="a" style="left:24px;top:417px;width:6px;height:1px;background:repeating-linear-gradient(to right,#9a9a90 0 1px,transparent 1px 2px);"></div>
<div class="a" style="left:15px;top:413px;width:9px;height:9px;background:#fff;box-shadow:inset 0 0 0 1px #8a8a80;"></div>
<div class="a" style="left:17px;top:417px;width:5px;height:1px;background:#000;"></div>
<div class="a" style="left:19px;top:415px;width:1px;height:5px;background:#000;"></div>
<div class="a" style="left:24px;top:433px;width:6px;height:1px;background:repeating-linear-gradient(to right,#9a9a90 0 1px,transparent 1px 2px);"></div>
<div class="a" style="left:15px;top:429px;width:9px;height:9px;background:#fff;box-shadow:inset 0 0 0 1px #8a8a80;"></div>
<div class="a" style="left:17px;top:433px;width:5px;height:1px;background:#000;"></div>
<div class="a" style="left:19px;top:431px;width:1px;height:5px;background:#000;"></div>
<div class="a" style="left:19px;top:449px;width:11px;height:1px;background:repeating-linear-gradient(to right,#9a9a90 0 1px,transparent 1px 2px);"></div>
<div class="a" style="left:24px;top:465px;width:6px;height:1px;background:repeating-linear-gradient(to right,#9a9a90 0 1px,transparent 1px 2px);"></div>
<div class="a" style="left:15px;top:461px;width:9px;height:9px;background:#fff;box-shadow:inset 0 0 0 1px #8a8a80;"></div>
<div class="a" style="left:17px;top:465px;width:5px;height:1px;background:#000;"></div>
<div class="a" style="left:19px;top:463px;width:1px;height:5px;background:#000;"></div>
<div class="a" style="left:166px;top:137px;width:5px;height:470px;background:#fdfdfc;"></div>
<div class="a" style="left:10px;top:608px;width:160px;height:16px;background:#f3f1e8;"></div>
<div class="a" style="left:12px;top:609px;width:14px;height:14px;background:#b9c4f2;border-radius:2px;box-shadow:inset 0 0 0 1px #fdfdff, inset -2px -2px 1px #a6b3ee, 0 0 0 0.500px #d0d6f0;"></div>
<div class="a" style="left:152px;top:609px;width:14px;height:14px;background:#b9c4f2;border-radius:2px;box-shadow:inset 0 0 0 1px #fdfdff, inset -2px -2px 1px #a6b3ee, 0 0 0 0.500px #d0d6f0;"></div>
<div class="a" style="left:29px;top:609px;width:93px;height:14px;background:#b9c4f2;border-radius:2px;box-shadow:inset 0 0 0 1px #fdfdff, inset -2px -2px 1px #a6b3ee, 0 0 0 0.500px #d0d6f0;"></div>
<svg style="left:15px;top:612px" width="7" height="8" viewBox="0 0 7 8"><path d="M5 0.500L1.500 4L5 7.500" stroke="#4a5c8a" stroke-width="2" fill="none"/></svg>
<svg style="left:156px;top:612px" width="7" height="8" viewBox="0 0 7 8"><path d="M1.500 0.500L5 4L1.500 7.500" stroke="#4a5c8a" stroke-width="2" fill="none"/></svg>
<div class="a" style="left:72px;top:613px;width:1px;height:6px;background:#e8ecfc;"></div>
<div class="a" style="left:74px;top:613px;width:1px;height:6px;background:#e8ecfc;"></div>
<div class="a" style="left:76px;top:613px;width:1px;height:6px;background:#e8ecfc;"></div>
<div class="a" style="left:78px;top:613px;width:1px;height:6px;background:#e8ecfc;"></div>
<div class="a" style="left:9px;top:628px;width:139px;height:42px;background:#ddd8c2;box-shadow:inset 1px 1px 0 #8a8674, inset 2px 2px 0 #55524a, inset -1px -1px 0 #fbfaf3;"></div>
<div class="a" style="left:148px;top:627px;width:22px;height:20px;background:#dfdac5;box-shadow:inset 1px 1px 0 #fbfaf3, inset -1px -1px 0 #6a6658, inset -2px -2px 0 #aaa590;"></div>
<svg style="left:151px;top:629px" width="16" height="14" viewBox="0 0 16 14"><path d="M1 3.500H8M4.500 1V9H10M2 3.500L4.500 1L7 3.500" stroke="#000" stroke-width="1.500" fill="none"/><path d="M14 6L11 8L14 10M10.500 12.500H15" stroke="#000" fill="none" stroke-width="1.200"/></svg>
<div class="a" style="left:117px;top:676px;width:55px;height:21px;background:#dfdac5;box-shadow:inset 0 -1px 0 #2a2a26;"></div>
<div class="a" style="left:14px;top:674px;width:104px;height:25px;background:#dfdac5;border-radius:0 0 3px 3px;box-shadow:inset 1px 0 0 #fbfaf3, inset -1px -1px 0 #55524a, inset -2px -2px 0 #aaa590;"></div>
<svg style="left:19.5px;top:677.5px" width="16" height="16" viewBox="0 0 16 16" shape-rendering="crispEdges"><rect x="0.500" y="1.500" width="6" height="13" fill="#fff" stroke="#111"/><rect x="2" y="4" width="2" height="2" fill="#111"/><rect x="2" y="8" width="2" height="2" fill="#2828c0"/><rect x="2" y="11" width="2" height="2" fill="#e8d820"/><path d="M7.500 1.500H12L14.500 4V14.500H7.500Z" fill="#fff" stroke="#111"/></svg>
<div class="t" style="left:38px;top:681px;font-size:11px;letter-spacing:-0.250px;">Elementos d...</div>
<svg style="left:122px;top:676.5px" width="14" height="16" viewBox="0 0 14 16" shape-rendering="crispEdges"><path d="M1.500 0.500H5.500M1.500 0.500V13.500M1.500 4.500H4M1.500 8.500H4M1.500 12.500H4M7 4.500H13M7 8.500H13M7 12.500H13M7 0.500H11" stroke="#111" fill="none"/><rect x="3" y="3" width="3" height="3" fill="#fff" stroke="#111"/><rect x="3" y="7" width="3" height="3" fill="#fff" stroke="#111"/><rect x="3" y="11" width="3" height="3" fill="#fff" stroke="#111"/></svg>
<div class="t" style="left:139px;top:681px;font-size:11px;letter-spacing:-0.1px;">Estruct</div>

<!-- editor.html -->
<div class="a" style="left:188px;top:95px;width:834px;height:1px;background:#222;"></div>
<div class="a" style="left:188px;top:96px;width:834px;height:1px;background:#aaa693;"></div>
<div class="a" style="left:188px;top:98px;width:834px;height:1px;background:#efecdf;"></div>
<div class="a" style="left:189px;top:102px;width:833px;height:599px;background:#1a1a1a;"></div>
<div class="a" id="ed" style="left:190px;top:103px;width:832px;height:598px;background:#fbfbfb;"></div>
<div class="m mb" style="left:207px;top:111px;">Segm. 5</div>
<div class="m" style="left:258.4px;top:111px;">:</div>
<div class="m" style="left:263px;top:111px;"> T&iacute;tulo:</div>
<div class="a" style="left:206px;top:131px;width:564px;height:33px;background:#b5ada7;border:1px solid #1c1c1c;"></div>
<div class="m" style="left:208px;top:134px;">Al llegar al segundo sensor, el motor gira al 100%</div>
<div class="m mb" style="left:207px;top:286px;">Segm. 6</div>
<div class="m" style="left:258.4px;top:286px;">:</div>
<div class="m" style="left:263px;top:286px;"> T&iacute;tulo:</div>
<div class="a" style="left:206px;top:306px;width:564px;height:33px;background:#b5ada7;border:1px solid #1c1c1c;"></div>
<div class="m" style="left:208px;top:309px;">Cuando llega al &uacute;ltimo detector, el motor se para y queda habilitado para la</div>
<div class="m" style="left:208px;top:323px;">siguiente instruccion</div>
<div class="m mb" style="left:207px;top:503px;">Segm. 7</div>
<div class="m" style="left:258.4px;top:503px;">:</div>
<div class="m" style="left:263px;top:503px;"> T&iacute;tulo:</div>
<div class="a" style="left:206px;top:523px;width:564px;height:33px;background:#b5ada7;border:1px solid #1c1c1c;"></div>
<div class="m" style="left:208px;top:526px;">Temporizamos 10 segundos con el motor parado para ejecutar la siguiente</div>
<div class="m" style="left:208px;top:540px;">instruccion</div>
<div class="k" style="left:206px;top:186px;width:1px;height:85px"></div>
<div class="k" style="left:207px;top:214px;width:36px;height:1px"></div>
<div class="k" style="left:242px;top:207px;width:1px;height:14px"></div>
<div class="k" style="left:254px;top:207px;width:1px;height:14px"></div>
<div class="m" style="left:233px;top:191px;">M50.0</div>
<div class="k" style="left:255px;top:214px;width:71px;height:1px"></div>
<div class="k" style="left:326px;top:207px;width:1px;height:14px"></div>
<div class="k" style="left:338px;top:207px;width:1px;height:14px"></div>
<div class="m" style="left:315px;top:191px;">E124.6</div>
<div class="k" style="left:339px;top:214px;width:42px;height:1px"></div>
<div class="k" style="left:381px;top:193px;width:71px;height:1px"></div>
<div class="k" style="left:381px;top:249px;width:71px;height:1px"></div>
<div class="k" style="left:381px;top:193px;width:1px;height:57px"></div>
<div class="k" style="left:451px;top:193px;width:1px;height:57px"></div>
<div class="s" style="left:403.5px;top:195px;letter-spacing:0.35px;">MOVE</div>
<div class="m" style="left:385px;top:208px;">EN</div>
<div class="m" style="left:428px;top:208px;">ENO</div>
<div class="m" style="left:385px;top:236px;">IN</div>
<div class="m" style="left:428px;top:236px;">OUT</div>
<div class="m" style="left:343px;top:236px;">4000</div>
<div class="k" style="left:373px;top:242px;width:8px;height:1px"></div>
<div class="k" style="left:452px;top:242px;width:8px;height:1px"></div>
<div class="m" style="left:461px;top:236px;">MW2</div>
<div class="k" style="left:452px;top:214px;width:42px;height:1px"></div>
<svg style="left:494px;top:207px" width="3" height="14" viewBox="0 0 3 14"><path d="M2.800 0.300Q-0.400 7 2.800 13.700" fill="none" stroke="#111" stroke-width="1.150"/></svg>
<svg style="left:503px;top:207px" width="3" height="14" viewBox="0 0 3 14"><path d="M0.200 0.300Q3.400 7 0.200 13.700" fill="none" stroke="#111" stroke-width="1.150"/></svg>
<div class="k" style="left:506px;top:214px;width:29px;height:1px"></div>
<div class="k" style="left:535px;top:207px;width:1px;height:14px"></div>
<div class="m" style="left:482px;top:191px;">A124.4</div>
<div class="k" style="left:206px;top:361px;width:1px;height:127px"></div>
<div class="g" style="left:207px;top:389px;width:36px;height:1px"></div>
<div class="k" style="left:242px;top:382px;width:1px;height:14px"></div>
<div class="k" style="left:254px;top:382px;width:1px;height:14px"></div>
<div class="m" style="left:231px;top:366px;">E124.1</div>
<div class="g" style="left:255px;top:389px;width:33px;height:1px"></div>
<div class="k" style="left:287px;top:389px;width:9px;height:1px"></div>
<div class="g" style="left:296px;top:389px;width:191px;height:1px"></div>
<div class="g" style="left:290px;top:389px;width:1px;height:33px"></div>
<div class="k" style="left:290px;top:422px;width:1px;height:10px"></div>
<div class="k" style="left:290px;top:431px;width:91px;height:1px"></div>
<div class="k" style="left:381px;top:410px;width:71px;height:1px"></div>
<div class="k" style="left:381px;top:466px;width:71px;height:1px"></div>
<div class="k" style="left:381px;top:410px;width:1px;height:57px"></div>
<div class="k" style="left:451px;top:410px;width:1px;height:57px"></div>
<div class="s" style="left:403.5px;top:412px;letter-spacing:0.35px;">MOVE</div>
<div class="m" style="left:385px;top:425px;">EN</div>
<div class="m" style="left:428px;top:425px;">ENO</div>
<div class="m" style="left:385px;top:453px;">IN</div>
<div class="m" style="left:428px;top:453px;">OUT</div>
<div class="m" style="left:307px;top:453px;">W#16#447E</div>
<div class="k" style="left:373px;top:459px;width:8px;height:1px"></div>
<div class="k" style="left:452px;top:459px;width:8px;height:1px"></div>
<div class="m" style="left:461px;top:453px;">MW0</div>
<div class="k" style="left:452px;top:431px;width:9px;height:1px"></div>
<div class="k" style="left:487px;top:389px;width:4px;height:1px"></div>
<svg style="left:491px;top:382px" width="3" height="14" viewBox="0 0 3 14"><path d="M2.800 0.300Q-0.400 7 2.800 13.700" fill="none" stroke="#111" stroke-width="1.150"/></svg>
<div class="m" style="left:497px;top:383px;">S</div>
<svg style="left:506px;top:382px" width="3" height="14" viewBox="0 0 3 14"><path d="M0.200 0.300Q3.400 7 0.200 13.700" fill="none" stroke="#111" stroke-width="1.150"/></svg>
<div class="k" style="left:509px;top:389px;width:4px;height:1px"></div>
<div class="g" style="left:513px;top:389px;width:14px;height:1px"></div>
<div class="k" style="left:527px;top:389px;width:8px;height:1px"></div>
<div class="k" style="left:535px;top:382px;width:1px;height:14px"></div>
<div class="m" style="left:485px;top:366px;">M90.5</div>
<div class="k" style="left:206px;top:578px;width:1px;height:107px"></div>
<div class="k" style="left:207px;top:620px;width:36px;height:1px"></div>
<div class="k" style="left:242px;top:613px;width:1px;height:14px"></div>
<div class="k" style="left:254px;top:613px;width:1px;height:14px"></div>
<div class="m" style="left:233px;top:597px;">M90.5</div>
<div class="k" style="left:255px;top:620px;width:42px;height:1px"></div>
<div class="k" style="left:297px;top:599px;width:71px;height:1px"></div>
<div class="k" style="left:297px;top:683px;width:71px;height:1px"></div>
<div class="k" style="left:297px;top:599px;width:1px;height:85px"></div>
<div class="k" style="left:367px;top:599px;width:1px;height:85px"></div>
<div class="m" style="left:329px;top:583px;">T0</div>
<div class="s" style="left:312px;top:600px;letter-spacing:0.35px;">S_EVERZ</div>
<div class="m" style="left:301px;top:614px;">S</div>
<div class="m" style="left:357px;top:614px;">Q</div>
<div class="m" style="left:301px;top:642px;">TW</div>
<div class="m" style="left:336px;top:642px;">DUAL</div>
<div class="m" style="left:237px;top:642px;">S5T#10S</div>
<div class="k" style="left:289px;top:648px;width:8px;height:1px"></div>
<div class="k" style="left:368px;top:648px;width:8px;height:1px"></div>
<div class="m" style="left:378px;top:642px;">...</div>
<div class="m" style="left:301px;top:670px;">R</div>
<div class="m" style="left:343px;top:670px;">DEZ</div>
<div class="m" style="left:265px;top:670px;">...</div>
<div class="k" style="left:289px;top:676px;width:8px;height:1px"></div>
<div class="k" style="left:368px;top:676px;width:8px;height:1px"></div>
<div class="m" style="left:378px;top:670px;">...</div>
<div class="k" style="left:368px;top:620px;width:123px;height:1px"></div>
<svg style="left:491px;top:613px" width="3" height="14" viewBox="0 0 3 14"><path d="M2.800 0.300Q-0.400 7 2.800 13.700" fill="none" stroke="#111" stroke-width="1.150"/></svg>
<div class="m" style="left:497px;top:614px;">R</div>
<svg style="left:506px;top:613px" width="3" height="14" viewBox="0 0 3 14"><path d="M0.200 0.300Q3.400 7 0.200 13.700" fill="none" stroke="#111" stroke-width="1.150"/></svg>
<div class="k" style="left:509px;top:620px;width:26px;height:1px"></div>
<div class="k" style="left:535px;top:613px;width:1px;height:14px"></div>
<div class="m" style="left:485px;top:597px;">M90.5</div>
<div class="a" style="left:381px;top:199px;width:1px;height:8px;background:#b9b7b5"></div>
<div class="a" style="left:381px;top:217px;width:1px;height:23px;background:#b9b7b5"></div>
<div class="a" style="left:381px;top:414px;width:1px;height:13px;background:#b9b7b5"></div>
<div class="a" style="left:381px;top:434px;width:1px;height:21px;background:#b9b7b5"></div>
<div class="a" style="left:384px;top:410px;width:13px;height:1px;background:#b9b7b5"></div>
<div class="a" style="left:430px;top:410px;width:16px;height:1px;background:#b9b7b5"></div>
<div class="a" style="left:385px;top:466px;width:61px;height:1px;background:#b9b7b5"></div>
<div class="a" style="left:367px;top:601px;width:1px;height:15px;background:#b9b7b5"></div>
<div class="a" style="left:367px;top:625px;width:1px;height:15px;background:#b9b7b5"></div>

<!-- bottom.html -->
<div class="a" style="left:1005px;top:103px;width:17px;height:582px;background:#f3f1e8;background:linear-gradient(to right,#ebe8dc,#f8f7f1 40%,#f3f1e8);"></div>
<div class="a" style="left:1022px;top:96px;width:1px;height:606px;background:#fbfaf4;"></div>
<div class="a" style="left:1023px;top:96px;width:1px;height:606px;background:#cfcab5;"></div>
<div class="a" style="left:1007px;top:104px;width:14px;height:14px;background:#b9c4f2;border-radius:2px;box-shadow:inset 0 0 0 1px #fdfdff, inset -2px -2px 1px #a6b3ee, 0 0 0 0.500px #d0d6f0;"></div>
<div class="a" style="left:1007px;top:668px;width:14px;height:14px;background:#b9c4f2;border-radius:2px;box-shadow:inset 0 0 0 1px #fdfdff, inset -2px -2px 1px #a6b3ee, 0 0 0 0.500px #d0d6f0;"></div>
<div class="a" style="left:1007px;top:334px;width:14px;height:14px;background:#b9c4f2;border-radius:2px;box-shadow:inset 0 0 0 1px #fdfdff, inset -2px -2px 1px #a6b3ee, 0 0 0 0.500px #d0d6f0;"></div>
<svg style="left:1010px;top:108px" width="8" height="6" viewBox="0 0 8 6"><path d="M0.500 5L4 1.500L7.500 5" stroke="#4a5c8a" stroke-width="2" fill="none"/></svg>
<svg style="left:1010px;top:672px" width="8" height="6" viewBox="0 0 8 6"><path d="M0.500 1L4 4.500L7.500 1" stroke="#4a5c8a" stroke-width="2" fill="none"/></svg>
<div class="a" style="left:1011px;top:337px;width:6px;height:1px;background:#e8ecfc;"></div>
<div class="a" style="left:1011px;top:339px;width:6px;height:1px;background:#e8ecfc;"></div>
<div class="a" style="left:1011px;top:341px;width:6px;height:1px;background:#e8ecfc;"></div>
<div class="a" style="left:1011px;top:343px;width:6px;height:1px;background:#e8ecfc;"></div>
<div class="a" style="left:1011px;top:338px;width:6px;height:1px;background:#8c9be0;"></div>
<div class="a" style="left:1011px;top:340px;width:6px;height:1px;background:#8c9be0;"></div>
<div class="a" style="left:1011px;top:342px;width:6px;height:1px;background:#8c9be0;"></div>
<div class="a" style="left:1011px;top:344px;width:6px;height:1px;background:#8c9be0;"></div>
<div class="a" style="left:190px;top:685px;width:815px;height:16px;background:#f3f1e8;background:linear-gradient(to bottom,#ebe8dc,#f8f7f1 40%,#f3f1e8);"></div>
<div class="a" style="left:1005px;top:685px;width:17px;height:16px;background:#dfdac5;"></div>
<div class="a" style="left:191px;top:686px;width:14px;height:14px;background:#b9c4f2;border-radius:2px;box-shadow:inset 0 0 0 1px #fdfdff, inset -2px -2px 1px #a6b3ee, 0 0 0 0.500px #d0d6f0;"></div>
<div class="a" style="left:989px;top:686px;width:14px;height:14px;background:#b9c4f2;border-radius:2px;box-shadow:inset 0 0 0 1px #fdfdff, inset -2px -2px 1px #a6b3ee, 0 0 0 0.500px #d0d6f0;"></div>
<div class="a" style="left:207px;top:686px;width:15px;height:14px;background:#b9c4f2;border-radius:2px;box-shadow:inset 0 0 0 1px #fdfdff, inset -2px -2px 1px #a6b3ee, 0 0 0 0.500px #d0d6f0;"></div>
<svg style="left:194px;top:689px" width="7" height="8" viewBox="0 0 7 8"><path d="M5 0.500L1.500 4L5 7.500" stroke="#4a5c8a" stroke-width="2" fill="none"/></svg>
<svg style="left:993px;top:689px" width="7" height="8" viewBox="0 0 7 8"><path d="M1.500 0.500L5 4L1.500 7.500" stroke="#4a5c8a" stroke-width="2" fill="none"/></svg>
<div class="a" style="left:211px;top:690px;width:1px;height:6px;background:#e8ecfc;"></div>
<div class="a" style="left:213px;top:690px;width:1px;height:6px;background:#e8ecfc;"></div>
<div class="a" style="left:215px;top:690px;width:1px;height:6px;background:#e8ecfc;"></div>
<div class="a" style="left:217px;top:690px;width:1px;height:6px;background:#e8ecfc;"></div>
<div class="a" style="left:0px;top:701px;width:1024px;height:1px;background:#f6f4ea;"></div>
<div class="a" style="left:0px;top:707px;width:1024px;height:1px;background:#1c1c1c;"></div>
<div class="a" style="left:0px;top:708px;width:1024px;height:1px;background:#f6f4ea;"></div>
<div class="a" style="left:19px;top:713px;width:1001px;height:1px;background:#9a9684;"></div>
<div class="a" style="left:19px;top:714px;width:1001px;height:1px;background:#1c1c1c;"></div>
<div class="a" style="left:1020px;top:713px;width:1px;height:20px;background:#f6f4ea;"></div>
<div class="a" style="left:5px;top:714px;width:11px;height:10px;background:#dfdac5;box-shadow:inset 1px 1px 0 #fbfaf3, inset -1px -1px 0 #8a8674;"></div>
<svg style="left:7px;top:716px" width="7" height="6" viewBox="0 0 7 6"><path d="M0.500 0.500L6.500 5.500M6.500 0.500L0.500 5.500" stroke="#000" stroke-width="1.600"/></svg>
<div class="a" style="left:5px;top:725px;width:11px;height:11px;background:#dfdac5;box-shadow:inset 1px 1px 0 #fbfaf3, inset -1px -1px 0 #8a8674;"></div>
<svg style="left:7px;top:727px" width="7" height="8" viewBox="0 0 7 8" shape-rendering="crispEdges"><path d="M2 0.500H5M2.500 0.500V4M4.500 0.500V4M1 4.500H6M3.500 5V8" stroke="#b0ab96" fill="none"/></svg>
<div class="a" style="left:20px;top:715px;width:17px;height:16px;background:#dfdac5;box-shadow:inset 1px 1px 0 #fbfaf3, inset -1px -1px 0 #55524a, inset -2px -2px 0 #aaa590;"></div>
<div class="a" style="left:38px;top:715px;width:17px;height:16px;background:#dfdac5;box-shadow:inset 1px 1px 0 #fbfaf3, inset -1px -1px 0 #55524a, inset -2px -2px 0 #aaa590;"></div>
<div class="a" style="left:56px;top:715px;width:17px;height:16px;background:#dfdac5;box-shadow:inset 1px 1px 0 #fbfaf3, inset -1px -1px 0 #55524a, inset -2px -2px 0 #aaa590;"></div>
<div class="a" style="left:74px;top:715px;width:17px;height:16px;background:#dfdac5;box-shadow:inset 1px 1px 0 #fbfaf3, inset -1px -1px 0 #55524a, inset -2px -2px 0 #aaa590;"></div>
<svg style="left:24px;top:718px" width="9" height="9" viewBox="0 0 9 9"><rect x="0" y="0" width="1.500" height="9" fill="#aaa590"/><path d="M8 0V9L2 4.500Z" fill="#aaa590"/></svg>
<svg style="left:43px;top:718px" width="7" height="9" viewBox="0 0 7 9"><path d="M6.500 0V9L0.500 4.500Z" fill="#aaa590"/></svg>
<svg style="left:62px;top:718px" width="7" height="9" viewBox="0 0 7 9"><path d="M0.500 0V9L6.500 4.500Z" fill="#aaa590"/></svg>
<svg style="left:78px;top:718px" width="9" height="9" viewBox="0 0 9 9"><rect x="7.500" y="0" width="1.500" height="9" fill="#aaa590"/><path d="M1 0V9L7 4.500Z" fill="#aaa590"/></svg>
<svg style="left:0;top:700px" width="1024" height="36" viewBox="0 700 1024 36" shape-rendering="auto">
<path d="M166 713L173 730.500H232L238.500 713Z" fill="#fdfdfb"/>
<path d="M98.500 730.500H891.500" stroke="#3a3a34" stroke-width="1" fill="none"/>
<path d="M173 730.500H232" stroke="#fdfdfb" stroke-width="1.500" fill="none"/>
<path d="M92.700 714.500L98.700 730.500" stroke="#1c1c1c" stroke-width="1.200" fill="none"/>
<path d="M166 714.500L172.7 730.500" stroke="#1c1c1c" stroke-width="1.200" fill="none"/>
<path d="M163.8 730.500L167.6 719.500" stroke="#1c1c1c" stroke-width="1.200" fill="none"/>
<path d="M399.5 714.500L406.2 730.500" stroke="#1c1c1c" stroke-width="1.200" fill="none"/>
<path d="M397.3 730.500L401.1 719.500" stroke="#1c1c1c" stroke-width="1.200" fill="none"/>
<path d="M570.7 714.500L577.4 730.500" stroke="#1c1c1c" stroke-width="1.200" fill="none"/>
<path d="M568.5 730.500L572.3 719.500" stroke="#1c1c1c" stroke-width="1.200" fill="none"/>
<path d="M664.5 714.500L671.2 730.500" stroke="#1c1c1c" stroke-width="1.200" fill="none"/>
<path d="M662.3 730.500L666.1 719.500" stroke="#1c1c1c" stroke-width="1.200" fill="none"/>
<path d="M775.5 714.500L782.2 730.500" stroke="#1c1c1c" stroke-width="1.200" fill="none"/>
<path d="M773.3 730.500L777.1 719.500" stroke="#1c1c1c" stroke-width="1.200" fill="none"/>
<path d="M232.300 730.500L238.300 714.500" stroke="#1c1c1c" stroke-width="1.200" fill="none"/>
<path d="M236.400 719.500L240.500 730.500" stroke="#1c1c1c" stroke-width="1.200" fill="none"/>
<path d="M891.400 730.500L897.200 714.500" stroke="#1c1c1c" stroke-width="1.200" fill="none"/>
</svg>
<div class="t" style="left:114.5px;top:718px;font-size:11px;letter-spacing:-0.150px;">1: Error</div>
<div class="t" style="left:187.5px;top:718px;font-size:11px;letter-spacing:-0.150px;">2: Info</div>
<div class="t" style="left:262.4px;top:718px;font-size:11px;letter-spacing:-0.150px;">3: Referencias cruzadas</div>
<div class="t" style="left:429.8px;top:718px;font-size:11px;letter-spacing:-0.150px;">4: Informaci&oacute;n operando</div>
<div class="t" style="left:594.8px;top:718px;font-size:11px;letter-spacing:-0.150px;">5: Forzado</div>
<div class="t" style="left:688.5px;top:718px;font-size:11px;letter-spacing:-0.150px;">6: Diagn&oacute;stico</div>
<div class="t" style="left:800px;top:718px;font-size:11px;letter-spacing:-0.150px;">7: Comparaci&oacute;n</div>
<div class="a" style="left:0px;top:733px;width:1024px;height:1px;background:#efecdf;"></div>
<div class="a" style="left:0px;top:737px;width:1024px;height:1px;background:#f8f6ee;"></div>

<!-- taskbar.html -->
<div class="a" style="left:0px;top:738px;width:1024px;height:30px;background:#245edb;background:linear-gradient(to bottom,#1941a5 0%,#3a80f2 6%,#2a6ae6 12%,#245edc 25%,#2359d6 60%,#2156cf 85%,#1a43a8 100%);"></div>
<div class="a" style="left:0px;top:738px;width:101px;height:30px;background:#3c9a3c;border-radius:0 12px 12px 0/0 16px 16px 0;background:linear-gradient(to bottom,#2d6e2a 0%,#5cae58 8%,#48a044 16%,#3a9238 40%,#35893a 70%,#2f7e33 90%,#245f27 100%);box-shadow:1px 0 2px #1a3a80;"></div>
<svg style="left:10px;top:743px" width="21" height="20" viewBox="-0.500 1 16.500 16"><path d="M2 3C4 1.500 6 1.500 8 3L7 8C5 6.500 3 6.500 1 8Z" fill="#e8582a"/><path d="M9 3.300C11 4.800 13 4.800 15.500 3.300L14.500 8.300C12.500 9.800 10.500 9.800 8 8.300Z" fill="#7ac043"/><path d="M0.800 9.500C2.800 8 4.800 8 6.800 9.500L5.800 14.500C3.800 13 1.800 13 -0.200 14.500Z" fill="#4a8ae8"/><path d="M7.800 9.800C9.800 11.300 11.800 11.300 14.300 9.800L13.300 14.800C11.300 16.300 9.300 16.300 6.800 14.800Z" fill="#f5c531"/></svg>
<div class="t" style="left:34.500px;top:744.500px;font-size:17.500px;font-weight:bold;font-style:italic;color:#fff;text-shadow:1px 1px 1px #1a4a1a;transform-origin:0 0;transform:scaleX(0.930);">Inicio</div>
<svg style="left:115px;top:745px" width="16" height="16" viewBox="0 0 16 16"><rect x="1" y="1" width="13" height="14" rx="3" fill="#c8e0f8" stroke="#2a5ab0"/><path d="M4 8C4 5 7 4 9 5.500M9 11C6 12 4 10 4 8" stroke="#2a5ab0" fill="none" stroke-width="1.500"/><path d="M7 9L13 4" stroke="#203060" stroke-width="1.500"/><path d="M12 3L15 5" stroke="#d03020" stroke-width="2"/></svg>
<svg style="left:139px;top:745px" width="16" height="16" viewBox="0 0 16 16"><path d="M8 8L1.505 4.250A7.500 7.500 0 0 1 14.495 4.250Z" fill="#e84335"/><path d="M8 8L14.495 4.250A7.500 7.500 0 0 1 8 15.500Z" fill="#f6c42a"/><path d="M8 8L8 15.500A7.500 7.500 0 0 1 1.505 4.250Z" fill="#4caf50"/><circle cx="8" cy="8" r="3.600" fill="#f4f6f8"/><circle cx="8" cy="8" r="2.600" fill="#4a80d8"/></svg>
<div class="a" style="left:165px;top:741px;width:158px;height:24px;background:#3c81f3;border-radius:3px;background:linear-gradient(to bottom,#5c9af8 0%,#3f84f4 12%,#3a7cf0 60%,#3272e4 100%);box-shadow:inset 1px 1px 0 #6aa4fa, 0 0 0 0.500px #2a5ac8;"></div>
<div class="a" style="left:325px;top:741px;width:158px;height:24px;background:#1e52b7;border-radius:3px;background:linear-gradient(to bottom,#183f94 0%,#1e52b7 15%,#2058c0 100%);box-shadow:inset 1px 1px 1px #143078;"></div>
<div class="a" style="left:485px;top:741px;width:158px;height:24px;background:#3c81f3;border-radius:3px;background:linear-gradient(to bottom,#5c9af8 0%,#3f84f4 12%,#3a7cf0 60%,#3272e4 100%);box-shadow:inset 1px 1px 0 #6aa4fa, 0 0 0 0.500px #2a5ac8;"></div>
<svg style="left:174px;top:744px" width="17" height="17" viewBox="0 0 17 17"><rect x="0" y="0" width="17" height="17" fill="#b8b4b0"/><path d="M9 1C12 0 15 3 12 6L6 12C4 15 0 13 1 10Z" fill="#0a0a0a"/><path d="M12 8H15L13 15" stroke="#18a0b8" stroke-width="1.800" fill="none"/></svg>
<svg style="left:335px;top:744px" width="17" height="17" viewBox="0 0 17 17"><rect x="0" y="0" width="17" height="17" fill="#b4b0ae"/><rect x="1" y="0" width="8" height="16" fill="#f4f4f2"/><rect x="0" y="0" width="1" height="16" fill="#0a0a0a"/><path d="M1 3.500H9M1 11.500H7M3.500 1V6M6.500 1V6M3.500 9V14M6.500 9V14" stroke="#0a0a0a" fill="none" shape-rendering="crispEdges"/><path d="M9.500 3.500L11.500 1.500L13.500 3.500L11.500 5.500Z" fill="#f4f4f2" stroke="#0a0a0a"/><path d="M7 5.500L9 10L11 8Z" fill="#0a0a0a"/><path d="M10 9L15 15" stroke="#d82818" stroke-width="3"/><path d="M9.500 8.500L11.500 11" stroke="#f0d020" stroke-width="3"/></svg>
<svg style="left:496px;top:744px" width="14" height="17" viewBox="0 0 14 17"><path d="M2 7H12L11 16H3Z" fill="#c89048"/><path d="M3 8L2 1M6 8V0M9 8L10 1M11 8L13 3" stroke="#e8c040" stroke-width="1.600"/><path d="M4.500 8L4 2" stroke="#d03828" stroke-width="1.500"/><path d="M7.500 8L8 1" stroke="#3858c8" stroke-width="1.500"/></svg>
<div class="t" style="left:194px;top:748px;font-size:11px;color:#fff;letter-spacing:-0.150px;">SIMATIC Manager - C...</div>
<div class="t" style="left:354px;top:748px;font-size:11px;color:#fff;letter-spacing:-0.150px;">KOP/AWL/FUP  - [OB...</div>
<div class="t" style="left:513px;top:748px;font-size:11px;color:#fff;letter-spacing:-0.150px;">prog2 - Paint</div>
<div class="a" style="left:895px;top:745px;width:17px;height:16px;background:#3562cf;"></div>
<div class="t" style="left:897px;top:748px;font-size:11px;color:#fff;letter-spacing:-0.150px;">ES</div>
<div class="a" style="left:930px;top:738px;width:94px;height:30px;background:#1290e8;background:linear-gradient(to bottom,#0c5cb8 0%,#1ea0f4 6%,#1594ee 14%,#118ae6 40%,#1086e0 75%,#0d72c8 92%,#0a5aa8 100%);box-shadow:inset 1px 0 0 #0e60b8, inset 2px 0 1px #4ab4f8;"></div>
<svg style="left:922px;top:744px" width="19" height="19" viewBox="0 0 19 19"><defs><radialGradient id="rb" cx="0.35" cy="0.3" r="0.8"><stop offset="0" stop-color="#6ab4fa"/><stop offset="0.6" stop-color="#2a7ae8"/><stop offset="1" stop-color="#1a56c0"/></radialGradient></defs><circle cx="9.500" cy="9.500" r="8.600" fill="url(#rb)" stroke="#cfe2fb" stroke-width="1"/><path d="M11.500 5.500L7.500 9.500L11.500 13.500" stroke="#fff" stroke-width="2.200" fill="none"/></svg>
<svg style="left:943px;top:744px" width="16" height="17" viewBox="0 0 16 17"><path d="M3 9L12 6.500L15.500 11.500L6 15.500Z" fill="#b8bcc0" stroke="#3a4048" stroke-width="0.800"/><path d="M6 15.500L15.500 11.500V13.500L6.500 17Z" fill="#50565c"/><path d="M6 11.500L11 9.800L12.500 12L7.500 14Z" fill="#e8ecf0" stroke="#50565c" stroke-width="0.500"/><path d="M1 4.500L5 0.500L6.500 2.500L10 1.500L11 5L7.500 6L8.500 8.500Z" fill="#28a838" stroke="#0a5a18" stroke-width="0.700"/></svg>
<svg style="left:959px;top:744px" width="18" height="18" viewBox="0 0 18 18"><defs><radialGradient id="ro" cx="0.4" cy="0.3" r="0.8"><stop offset="0" stop-color="#f8a050"/><stop offset="0.55" stop-color="#e0601a"/><stop offset="1" stop-color="#8a2c08"/></radialGradient></defs><circle cx="9" cy="9" r="8.300" fill="url(#ro)"/><path d="M5 10.500A4.200 4.200 0 1 1 10.500 13.200" fill="none" stroke="#fdf2e6" stroke-width="2.600"/></svg>
<div class="t" style="left:986px;top:748px;font-size:11px;color:#fff;letter-spacing:-0.150px;">9:22</div>

</div>
</body></html>
